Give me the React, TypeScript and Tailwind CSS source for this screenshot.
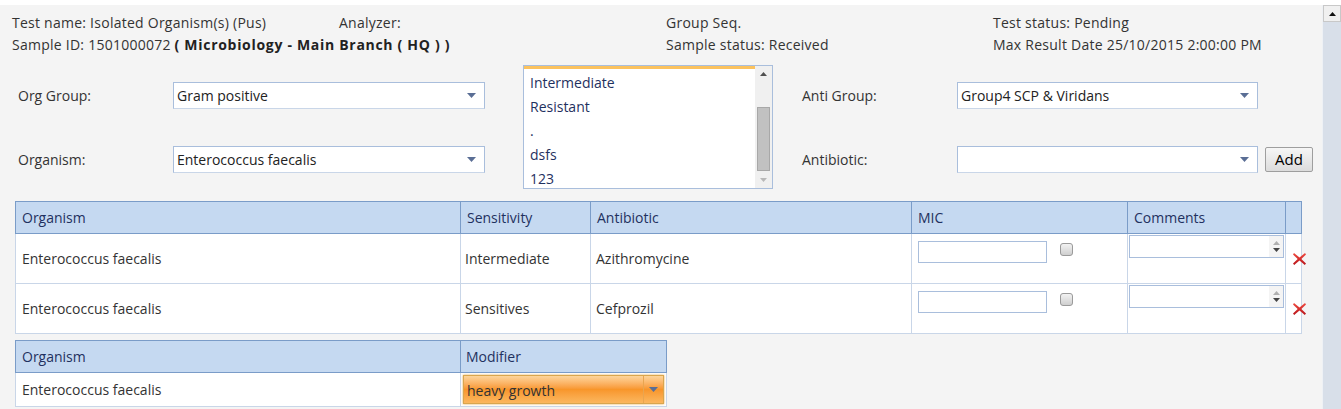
import React from "react";

const font = { fontFamily: '"Open Sans", "Noto Sans", sans-serif' };

const SelectBox: React.FC<{ value: string; width: string }> = ({ value, width }) => (
  <div className={`${width} h-[27px] bg-white border border-[#a9bedc] border-b-[#c9d6e8] flex items-center justify-between pl-[3px] pr-[8px]`}>
    <span className="text-[14px] text-[#222]">{value}</span>
    <svg width="9" height="5" viewBox="0 0 9 5">
      <path d="M0 0 L9 0 L4.5 5 Z" fill="#5a6e95" />
    </svg>
  </div>
);

const RedX: React.FC = () => (
  <svg width="15" height="14" viewBox="0 0 15 14">
    <defs>
      <linearGradient id="xg" x1="0" y1="0" x2="0" y2="1">
        <stop offset="0" stopColor="#f04a40" />
        <stop offset="1" stopColor="#b8141a" />
      </linearGradient>
    </defs>
    <path d="M2 1 L7.5 5.5 L13 1 L14 2.5 L9.3 7 L14 11.5 L12.8 13 L7.5 8.6 L2.2 13 L1 11.5 L5.7 7 L1 2.5 Z" fill="url(#xg)" />
  </svg>
);

const Checkbox: React.FC = () => (
  <div className="w-[13px] h-[13px] rounded-[3px] border border-[#9a9a9a] bg-gradient-to-b from-[#f2f2f2] to-[#cfcfcf]" />
);

const Spinner: React.FC = () => (
  <div className="w-[155px] h-[23px] bg-white border border-[#a9bedc] flex justify-end">
    <div className="w-[14px] h-full flex flex-col items-center justify-center gap-[3px] bg-[#f4f4f4]">
      <svg width="7" height="4" viewBox="0 0 7 4"><path d="M0 4 L7 4 L3.5 0 Z" fill="#b0b0b0" /></svg>
      <svg width="7" height="4" viewBox="0 0 7 4"><path d="M0 0 L7 0 L3.5 4 Z" fill="#444" /></svg>
    </div>
  </div>
);

const rows = [
  { org: "Enterococcus faecalis", sens: "Intermediate", anti: "Azithromycine" },
  { org: "Enterococcus faecalis", sens: "Sensitives", anti: "Cefprozil" },
];

const App: React.FC = () => {
  return (
    <div className="w-[1341px] h-[409px] bg-white pt-[5px] overflow-hidden text-[#333]" style={font}>
      <div className="flex h-[404px]">
        {/* Main content */}
        <div className="flex-1 bg-[#f4f4f4]">
          {/* Header info */}
          <div className="pt-[7px] pl-[12px] grid grid-cols-[327px_327px_327px_300px] text-[14px] leading-[22px] tracking-[0.25px]">
            <div className="whitespace-nowrap">Test name: Isolated Organism(s) (Pus)</div>
            <div>Analyzer:</div>
            <div>Group Seq.</div>
            <div>Test status: Pending</div>
            <div className="whitespace-nowrap col-span-2">
              Sample ID: 1501000072 <b className="text-[#222] tracking-[0.7px]">( Microbiology - Main Branch ( HQ ) )</b>
            </div>
            <div>Sample status: Received</div>
            <div className="whitespace-nowrap">Max Result Date 25/10/2015 2:00:00 PM</div>
          </div>

          {/* Form */}
          <div className="flex mt-[9px] text-[14px]">
            <div className="pl-[18px] pt-[17px] flex flex-col gap-[37px]">
              <div className="flex items-center">
                <span className="w-[155px]">Org Group:</span>
                <SelectBox value="Gram positive" width="w-[312px]" />
              </div>
              <div className="flex items-center">
                <span className="w-[155px]">Organism:</span>
                <SelectBox value="Enterococcus faecalis" width="w-[312px]" />
              </div>
            </div>

            {/* Listbox */}
            <div className="ml-[38px] w-[250px] h-[124px] bg-white border border-[#a9bedc] flex overflow-hidden">
              <div className="flex-1 flex flex-col">
                <div className="h-[3px] shrink-0 bg-[#fbc25e] mb-[2px]" />
                {["Intermediate", "Resistant", ".", "dsfs", "123"].map((v) => (
                  <div key={v} className="h-[24px] shrink-0 leading-[24px] pl-[6px] text-[#1f3160]">{v}</div>
                ))}
              </div>
              <div className="w-[17px] bg-[#f0f0f0] flex flex-col items-center">
                <div className="h-[17px] flex items-center justify-center">
                  <svg width="7" height="4" viewBox="0 0 7 4"><path d="M0 4 L7 4 L3.5 0 Z" fill="#505050" /></svg>
                </div>
                <div className="mt-[24px] w-[13px] h-[65px] bg-[#c1c1c1] border border-[#a8a8a8]" />
                <div className="flex-1" />
                <div className="h-[17px] flex items-center justify-center">
                  <svg width="7" height="4" viewBox="0 0 7 4"><path d="M0 0 L7 0 L3.5 4 Z" fill="#b8b8b8" /></svg>
                </div>
              </div>
            </div>

            <div className="ml-[29px] pt-[17px] flex flex-col gap-[37px]">
              <div className="flex items-center">
                <span className="w-[155px]">Anti Group:</span>
                <SelectBox value="Group4 SCP & Viridans" width="w-[301px]" />
              </div>
              <div className="flex items-center">
                <span className="w-[155px]">Antibiotic:</span>
                <SelectBox value="" width="w-[301px]" />
                <button className="ml-[7px] w-[48px] h-[25px] border border-[#9e9e9e] rounded-[2px] bg-gradient-to-b from-[#f6f6f6] to-[#dcdcdc] text-[15px] text-black">
                  Add
                </button>
              </div>
            </div>
          </div>

          {/* Sensitivity table */}
          <table className="ml-[15px] mt-[12px] w-[1286px] border-collapse border border-[#7a9cc8] text-[14px] table-fixed">
            <colgroup>
              <col className="w-[445px]" />
              <col className="w-[130px]" />
              <col className="w-[321px]" />
              <col className="w-[216px]" />
              <col className="w-[158px]" />
              <col className="w-[16px]" />
            </colgroup>
            <thead>
              <tr className="h-[32px] bg-[#c5d9f1] text-[#1f3160]">
                {["Organism", "Sensitivity", "Antibiotic", "MIC", "Comments", ""].map((h, i) => (
                  <th key={i} className="font-normal text-left px-[6px] border border-[#7a9cc8]">{h}</th>
                ))}
              </tr>
            </thead>
            <tbody>
              {rows.map((r, i) => (
                <tr key={i} className="h-[50px] bg-white">
                  <td className="px-[6px] border border-[#c9d6e8]">{r.org}</td>
                  <td className="px-[4px] border border-[#c9d6e8]">{r.sens}</td>
                  <td className="px-[5px] border border-[#c9d6e8]">{r.anti}</td>
                  <td className="align-top pt-[7px] pl-[6px] border border-[#c9d6e8]">
                    <div className="flex items-start">
                      <div className="w-[129px] h-[22px] bg-white border border-[#a9bedc]" />
                      <div className="ml-[13px] mt-[2px]"><Checkbox /></div>
                    </div>
                  </td>
                  <td className="align-top pt-[1px] pl-[1px] border border-[#c9d6e8]">
                    <Spinner />
                  </td>
                  <td className="border border-[#c9d6e8] pl-[6px] pt-[1px]">
                    <RedX />
                  </td>
                </tr>
              ))}
            </tbody>
          </table>

          {/* Modifier table */}
          <table className="ml-[15px] mt-[6px] w-[651px] border-collapse border border-[#7a9cc8] text-[14px] table-fixed">
            <colgroup>
              <col className="w-[445px]" />
              <col className="w-[206px]" />
            </colgroup>
            <thead>
              <tr className="h-[32px] bg-[#c5d9f1] text-[#1f3160]">
                <th className="font-normal text-left px-[6px] border border-[#7a9cc8]">Organism</th>
                <th className="font-normal text-left px-[5px] border border-[#7a9cc8]">Modifier</th>
              </tr>
            </thead>
            <tbody>
              <tr className="h-[34px] bg-white">
                <td className="px-[6px] border border-[#c9d6e8]">Enterococcus faecalis</td>
                <td className="p-[2px] border border-[#c9d6e8]">
                  <div className="w-[201px] h-[29px] border border-[#d9a64e] bg-gradient-to-b from-[#fdd59a] via-[#f8962a] to-[#fbb75e] flex items-center shadow-[0_0_2px_#e7a640]">
                    <span className="flex-1 pl-[3px] pt-[2px] text-[14px] text-[#333]">heavy growth</span>
                    <div className="w-[20px] h-full border-l border-[#e9a550] flex items-center justify-center">
                      <svg width="9" height="5" viewBox="0 0 9 5"><path d="M0 0 L9 0 L4.5 5 Z" fill="#5a6e95" /></svg>
                    </div>
                  </div>
                </td>
              </tr>
            </tbody>
          </table>
        </div>

        {/* Page scrollbar */}
        <div className="w-[19px] bg-[#d8dfe9] border-l border-[#eef1f5] flex flex-col">
          <div className="h-[17px] bg-[#f0f0f0] border border-[#c8c8c8] flex items-center justify-center">
            <svg width="7" height="4" viewBox="0 0 7 4"><path d="M0 4 L7 4 L3.5 0 Z" fill="#111" /></svg>
          </div>
        </div>
      </div>
    </div>
  );
};

export default App;
